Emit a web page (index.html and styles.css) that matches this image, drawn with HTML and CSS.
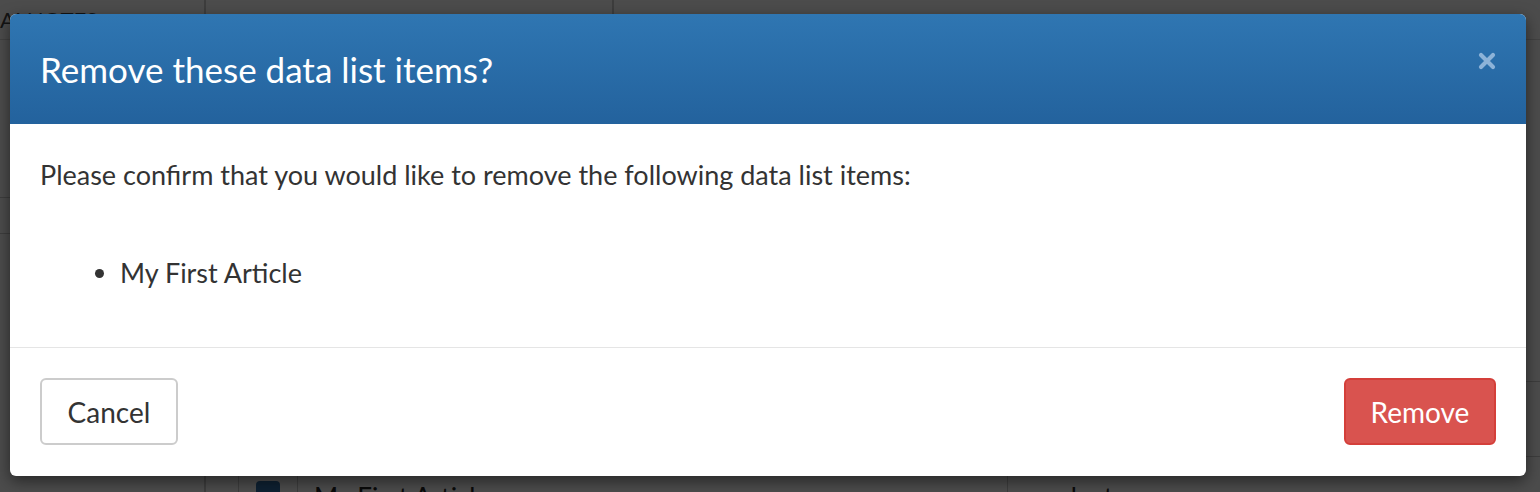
FILE: index.html
```html
<!DOCTYPE html>
<html>
<head>
<meta charset="utf-8">
<link rel="stylesheet" href="styles.css">
</head>
<body>
<div class="page">
  <div class="topbar">
    <div class="side-top">AI NOTES</div>
    <div class="top-mid"></div>
    <div class="top-rest"></div>
  </div>
  <div class="main">
    <div class="sidebar">
      <div class="side-item">Overview</div>
      <div class="side-item">Pages</div>
      <div class="side-rule"></div>
      <div class="side-item">Content</div>
    </div>
    <div class="content">
      <div class="line-row first"></div>
      <div class="line-row"></div>
      <div class="table-row">
        <div class="cell c-handle"></div>
        <div class="cell c-check"><span class="checkbox"></span></div>
        <div class="cell c-name">My First Article</div>
        <div class="cell c-type">product</div>
      </div>
    </div>
  </div>
</div>
<div class="overlay">
  <div class="modal">
    <div class="modal-header">
      <h2 class="modal-title">Remove these data list items?</h2>
      <span class="close" aria-label="Close">
        <svg width="18" height="18" viewBox="0 0 18 18"><path d="M3 3 L15 15 M15 3 L3 15" stroke="currentColor" stroke-width="4.2" stroke-linecap="round"/></svg>
      </span>
    </div>
    <div class="modal-body">
      <p class="lead">Please confirm that you would like to remove the following data list items:</p>
      <ul class="items">
        <li>My First Article</li>
      </ul>
    </div>
    <div class="modal-footer">
      <button class="btn btn-default">Cancel</button>
      <button class="btn btn-danger">Remove</button>
    </div>
  </div>
</div>
</body>
</html>
```
FILE: styles.css
```css
* { box-sizing: border-box; }
html, body { margin: 0; padding: 0; }
body {
  width: 1540px;
  height: 492px;
  overflow: hidden;
  font-family: Lato, "Open Sans", "Liberation Sans", sans-serif;
  background: #fff;
  color: #333;
  position: relative;
}
.page { width: 1540px; height: 492px; overflow: hidden; display: flex; flex-direction: column; }
.topbar { height: 40px; flex: none; display: flex; border-bottom: 1px solid #ddd; }
.side-top { width: 206px; border-right: 2px solid #ccc; padding: 6px 0 0 0; font-size: 22px; color: #444; overflow: hidden; white-space: nowrap; }
.top-mid { width: 408px; border-right: 2px solid #ccc; }
.top-rest { flex: 1; }
.main { flex: 1; display: flex; min-height: 0; }
.sidebar { width: 206px; flex: none; border-right: 2px solid #ccc; display: flex; flex-direction: column; overflow: hidden; }
.side-item { font-size: 28px; color: #222; height: 70px; padding-top: 34px; white-space: nowrap; direction: rtl; text-align: right; padding-right: 0; margin-left: -200px; }
.side-rule { height: 37px; border-top: 1px solid #ccc; border-bottom: 1px solid #ccc; margin: 17px 0 0 0; }
.content { flex: 1; display: flex; flex-direction: column; }
.line-row { height: 75px; flex: none; border-bottom: 1px solid #ccc; }
.line-row.first { height: 342px; }
.table-row { display: flex; height: 75px; flex: none; font-size: 26px; color: #222; align-items: stretch; }
.cell { border-right: 1px solid #ccc; padding: 24px 16px 0; white-space: nowrap; }
.c-handle { width: 31px; }
.c-check { width: 59px; padding: 24px 17px 0; }
.checkbox { display: block; width: 24px; height: 24px; border-radius: 4px; background: #2f6ea8; }
.c-name { width: 710px; }
.c-type { flex: 1; border-right: none; }

.overlay {
  position: absolute;
  inset: 0;
  background: rgba(0, 0, 0, 0.7);
  padding: 14px 14px 0 10px;
}
.modal {
  width: 1516px;
  height: 462px;
  background: #fff;
  border-radius: 6px;
  box-shadow: 0 5px 15px rgba(0, 0, 0, 0.5);
  overflow: hidden;
  display: flex;
  flex-direction: column;
}
.modal-header {
  height: 110px;
  flex: none;
  background: linear-gradient(to bottom, #2f76b2, #23629d);
  display: flex;
  align-items: center;
  justify-content: space-between;
  padding: 0 30px 0 30px;
}
.modal-title {
  margin: 0;
  font-weight: 400;
  font-size: 35px;
  line-height: 40px;
  color: #fff;
}
.close {
  color: #8db3d8;
  display: flex;
  margin-top: -16px;
}
.modal-body {
  flex: 1;
  padding: 33px 30px 0 30px;
  font-size: 27px;
  color: #333;
}
.lead { margin: 0; line-height: 36px; }
.items { margin: 62px 0 0 0; padding-left: 80px; line-height: 36px; }
.modal-footer {
  height: 129px;
  flex: none;
  border-top: 1px solid #e5e5e5;
  display: flex;
  justify-content: space-between;
  align-items: flex-start;
  padding: 30px 30px 0 30px;
}
.btn {
  height: 67px;
  border-radius: 6px;
  font-family: inherit;
  font-size: 28px;
  padding: 0;
  cursor: pointer;
}
.btn-default { width: 138px; background: #fff; border: 2px solid #ccc; color: #333; }
.btn-danger { width: 152px; background: #d9534f; border: 2px solid #d43f3a; color: #fff; }
```
